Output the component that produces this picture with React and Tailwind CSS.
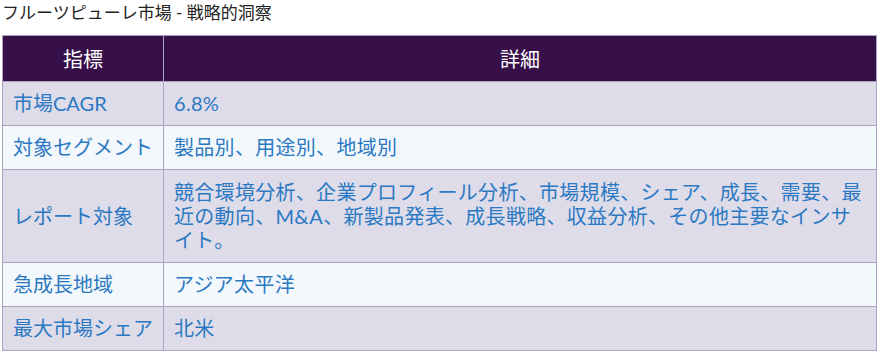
const rows = [
  { label: '市場CAGR', detail: '6.8%' },
  { label: '対象セグメント', detail: '製品別、用途別、地域別' },
  {
    label: 'レポート対象',
    detail:
      '競合環境分析、企業プロフィール分析、市場規模、シェア、成長、需要、最近の動向、M&A、新製品発表、成長戦略、収益分析、その他主要なインサイト。',
    long: true,
  },
  { label: '急成長地域', detail: 'アジア太平洋' },
  { label: '最大市場シェア', detail: '北米' },
]

function App() {
  return (
    <div className="w-[880px] h-[352px] bg-white px-[2px] font-['Lato','Noto_Sans_CJK_JP',sans-serif]">
      <h1 className="pt-[1px] text-[17px] leading-[23px] text-[#222]">
        フルーツピューレ市場 - 戦略的洞察
      </h1>
      <table className="mt-[11px] w-[875px] border-collapse border border-[#aaa4c2] text-[20px]">
        <thead>
          <tr className="bg-[#37104a] text-white h-[46px]">
            <th className="w-[161px] border border-[#aaa4c2] font-normal">指標</th>
            <th className="border border-[#aaa4c2] font-normal">詳細</th>
          </tr>
        </thead>
        <tbody>
          {rows.map((row, i) => (
            <tr
              key={row.label}
              className={i % 2 === 0 ? 'bg-[#dfdcea]' : 'bg-[#f3f8fc]'}
            >
              <td className="border border-[#aaa4c2] px-[10px] py-[10px] leading-[23px] text-[#2b79c2] whitespace-nowrap">
                {row.label}
              </td>
              <td
                className={`border border-[#aaa4c2] px-[10px] py-[10px] tracking-[0.3px] text-[#2b79c2] ${
                  row.long ? 'leading-[24px]' : 'leading-[23px]'
                }`}
              >
                {row.detail}
              </td>
            </tr>
          ))}
        </tbody>
      </table>
    </div>
  )
}

export default App
